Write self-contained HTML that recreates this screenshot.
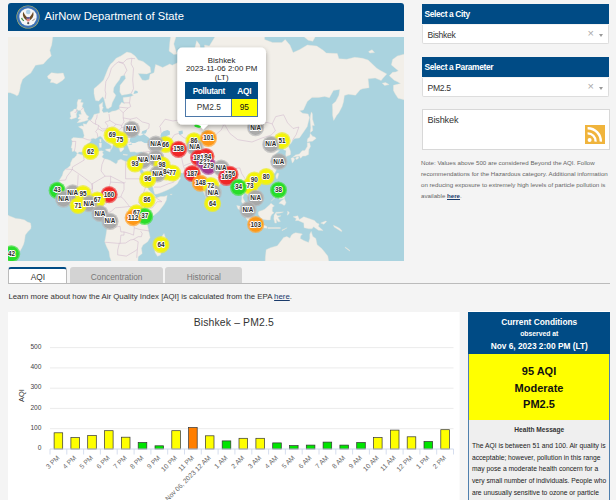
<!DOCTYPE html>
<html><head><meta charset="utf-8"><style>
*{margin:0;padding:0;box-sizing:border-box}
html,body{width:616px;height:500px;overflow:hidden;background:#f4f4f4;font-family:"Liberation Sans", sans-serif;position:relative}
.abs{position:absolute}
.hdr{left:8px;top:3px;width:396px;height:28px;background:#004b85;border-radius:3px 3px 0 0}
.hdr .t{position:absolute;left:36.6px;top:7.4px;font-size:11.2px;color:#fff;white-space:nowrap}
.sel-h{left:421.5px;width:187.7px;height:20px;background:#004b85;color:#fff;font-weight:bold;font-size:8.4px;letter-spacing:-0.35px;padding:5.6px 0 0 3px;white-space:nowrap}
.sel-i{left:421.5px;width:187.7px;height:19.4px;background:#fff;border:1px solid #ddd;border-top:none;border-radius:0 0 2px 2px;font-size:8.6px;color:#333;padding:5.8px 0 0 5px;letter-spacing:-0.3px}
.x{position:absolute;left:165px;top:2.7px;font-size:11px;color:#aaa}
.ar{position:absolute;left:176.6px;top:9.4px;width:0;height:0;border-left:2.5px solid transparent;border-right:2.5px solid transparent;border-top:3px solid #999}
.note{left:421px;top:156.5px;width:190px;font-size:6.17px;line-height:11px;color:#666}
.tab{top:267px;height:16.5px;font-size:8.3px;text-align:center;padding-top:5.3px;border-radius:3px 3px 0 0}
</style></head>
<body>
<div class="abs hdr"><svg class="abs" style="left:7.8px;top:2.0px" width="24" height="24" viewBox="0 0 24 24"><circle cx="12" cy="12" r="11.6" fill="#b8b866"/><circle cx="12" cy="12" r="11.0" fill="#3d73b6"/><circle cx="12" cy="12" r="8.7" fill="#f6f6f6"/><circle cx="12.2" cy="7.0" r="2.3" fill="#a9cde6"/><path d="M7.3,6.8 C6.3,9.8 7.0,13.2 10.8,15.4 L11,12.2 C9.6,11.2 8.4,9.4 7.3,6.8Z" fill="#6a4a25"/><path d="M17.1,6.8 C18.1,9.8 17.4,13.2 13.6,15.4 L13.4,12.2 C14.8,11.2 16.0,9.4 17.1,6.8Z" fill="#6a4a25"/><rect x="10.7" y="12.3" width="3" height="4.2" rx="1" fill="#e08080"/><rect x="10.7" y="12.3" width="3" height="1.3" fill="#2a4a9a"/><path d="M5.6,12.8 q0.6,2.4 2.4,3" stroke="#3a8a3a" stroke-width="1.2" fill="none"/><path d="M16.4,15.6 q1.6,-0.4 2.4,-2" stroke="#8a7a60" stroke-width="0.8" fill="none"/><circle cx="12.2" cy="18.2" r="1.1" fill="#555"/></svg><div class="t">AirNow Department of State</div></div><svg width="396" height="224" viewBox="0 0 396 224" style="position:absolute;left:8px;top:37px;display:block">
<rect width="396" height="224" fill="#aad3df"/>
<path d="M69.3,116.4 L68.1,114.8 L66.4,114.0 L64.0,114.4 L64.2,111.4 L63.1,110.8 L64.0,107.3 L64.2,104.2 L63.4,102.0 L65.5,100.5 L70.2,100.9 L75.3,101.2 L76.2,98.5 L74.6,92.6 L70.5,89.8 L73.4,88.8 L75.6,89.3 L75.1,86.7 L78.4,87.2 L80.6,83.7 L83.2,82.7 L85.2,79.6 L86.0,77.5 L89.2,76.7 L91.7,75.9 L91.7,71.6 L91.1,67.9 L94.7,65.2 L94.4,69.6 L95.3,70.2 L93.9,73.5 L95.5,75.7 L99.4,74.9 L100.7,75.9 L104.2,74.3 L107.5,73.8 L111.3,72.1 L111.4,68.7 L113.7,65.2 L116.5,66.7 L115.2,62.9 L115.2,60.4 L122.3,59.8 L125.5,58.2 L123.1,56.6 L117.6,57.6 L113.7,58.2 L111.8,55.0 L112.1,48.3 L117.6,41.4 L116.8,38.0 L112.9,39.2 L111.3,42.9 L108.1,46.9 L105.8,50.7 L105.3,55.0 L107.8,58.2 L106.9,60.4 L104.2,65.8 L103.4,69.6 L100.2,71.8 L98.5,71.3 L97.8,68.7 L96.7,64.4 L95.8,61.3 L94.7,59.8 L93.1,61.3 L90.7,64.1 L87.6,63.5 L86.8,60.4 L86.0,56.6 L86.0,51.7 L89.2,49.0 L92.3,46.2 L95.5,42.9 L97.8,37.3 L100.2,31.3 L102.6,27.0 L105.0,24.9 L108.1,21.3 L112.9,18.9 L118.9,15.1 L123.1,16.1 L127.1,18.9 L130.2,23.1 L135.0,24.4 L142.1,30.0 L142.9,35.3 L138.9,36.9 L130.2,36.5 L134.2,42.9 L137.3,43.6 L141.0,42.5 L142.1,37.3 L146.0,35.7 L147.6,27.5 L150.8,28.7 L154.7,30.4 L161.8,27.0 L164.2,28.3 L170.5,25.3 L173.7,21.3 L182.4,24.0 L184.8,27.0 L186.3,28.3 L183.8,22.6 L186.3,13.2 L188.7,3.7 L191.9,8.0 L192.7,15.6 L193.1,27.0 L194.2,34.9 L195.8,31.3 L196.6,24.9 L196.6,8.0 L201.3,9.1 L205.3,2.6 L214.0,-12.4 L256.6,-12.4 L256.6,2.6 L264.5,5.4 L274.0,5.4 L277.2,2.6 L281.9,8.0 L285.1,15.6 L291.4,12.7 L299.3,8.0 L308.8,9.1 L315.1,13.2 L318.3,16.1 L329.3,16.6 L330.9,21.7 L338.8,22.2 L346.7,20.3 L354.6,21.3 L360.1,23.1 L362.5,25.3 L368.8,31.3 L372.0,33.3 L378.8,36.9 L375.1,41.1 L373.2,43.6 L367.2,41.1 L360.1,41.8 L361.1,50.7 L354.6,51.7 L352.2,52.7 L347.5,58.2 L340.4,57.3 L336.4,58.5 L335.6,64.4 L334.1,69.6 L330.9,75.7 L328.8,78.3 L325.7,83.4 L324.6,78.3 L324.6,72.9 L324.4,67.3 L327.7,64.4 L330.9,58.2 L331.7,52.4 L325.4,53.4 L321.4,60.7 L316.7,59.5 L310.4,60.4 L304.0,60.4 L299.3,64.4 L295.4,72.9 L291.6,73.8 L294.6,76.2 L300.1,77.0 L301.5,80.4 L300.1,85.9 L299.3,89.6 L296.1,94.2 L291.4,100.9 L286.7,101.6 L284.6,103.5 L283.0,106.3 L280.3,109.0 L282.6,114.4 L282.6,117.4 L281.9,118.1 L278.0,119.5 L277.7,117.4 L278.1,113.6 L275.6,112.8 L275.9,109.4 L274.5,108.4 L271.2,107.3 L269.6,110.8 L270.7,106.7 L266.9,108.6 L264.2,110.4 L266.0,113.2 L271.6,113.6 L268.2,116.4 L266.4,118.7 L269.0,124.0 L270.7,126.0 L270.7,127.9 L268.6,132.2 L267.1,135.7 L264.5,137.6 L262.2,140.1 L257.4,141.4 L252.7,143.1 L251.6,142.6 L248.7,142.6 L246.7,144.0 L245.1,147.5 L247.2,150.5 L250.2,152.9 L250.8,157.8 L250.2,159.4 L246.4,162.3 L245.6,163.1 L243.7,163.8 L243.7,160.7 L240.8,159.9 L239.7,158.0 L237.5,156.0 L236.1,156.7 L234.8,160.7 L236.6,164.2 L238.5,166.6 L241.5,170.3 L242.7,175.2 L241.6,175.3 L238.2,173.0 L236.7,169.5 L233.4,164.7 L233.9,161.5 L233.7,156.7 L232.5,151.0 L231.4,151.0 L227.4,151.8 L226.9,147.7 L224.2,144.0 L223.5,141.8 L221.1,141.8 L218.7,142.1 L215.6,143.5 L214.8,145.1 L211.6,147.7 L208.1,150.8 L205.0,152.6 L204.8,156.7 L204.2,160.7 L201.8,163.3 L200.6,164.6 L198.5,161.7 L196.3,156.8 L194.2,151.8 L193.1,146.8 L192.8,142.6 L188.7,143.6 L187.1,141.1 L189.2,140.2 L186.3,139.2 L184.0,136.9 L183.2,135.9 L175.3,136.2 L171.0,135.5 L168.6,132.9 L167.1,132.7 L164.2,133.8 L159.5,131.5 L157.6,129.1 L154.7,127.7 L153.9,129.5 L156.5,133.1 L157.4,134.5 L159.5,136.6 L164.2,138.0 L166.6,136.6 L167.1,134.3 L167.2,136.8 L170.5,139.0 L172.6,140.9 L170.5,144.5 L169.3,146.8 L165.0,150.1 L160.6,152.4 L154.7,155.1 L149.2,157.0 L146.8,157.2 L145.6,153.4 L145.2,151.0 L142.9,146.8 L140.0,142.6 L138.1,138.3 L135.8,134.8 L133.4,131.1 L133.4,128.6 L132.6,131.3 L132.1,131.8 L129.6,127.9 L131.0,132.2 L131.8,134.8 L134.2,138.3 L136.9,143.5 L137.2,147.3 L139.1,149.3 L140.5,152.6 L143.7,155.9 L146.5,158.6 L148.4,160.9 L152.4,159.6 L156.3,159.4 L159.2,158.6 L158.7,160.9 L158.4,163.1 L156.3,167.1 L153.9,170.3 L150.8,174.2 L146.0,178.2 L142.9,181.0 L140.8,183.7 L139.4,187.7 L140.5,193.3 L142.1,200.6 L139.7,204.7 L135.0,208.0 L133.4,211.3 L134.2,216.5 L130.2,219.8 L129.9,224.4 L128.7,236.5 L103.4,236.5 L103.4,224.4 L101.8,220.0 L101.0,214.6 L98.6,209.7 L96.7,204.7 L97.8,198.9 L99.0,191.4 L97.4,186.9 L96.7,184.5 L92.8,179.0 L93.1,176.6 L93.6,173.4 L93.1,171.1 L91.5,170.1 L89.2,170.4 L87.6,170.6 L85.2,167.4 L83.5,167.3 L80.5,167.6 L74.9,169.8 L71.8,169.2 L66.2,170.4 L61.5,167.4 L59.9,166.3 L57.2,163.9 L56.5,162.3 L54.4,159.9 L51.7,157.8 L50.4,153.9 L52.0,151.8 L52.5,146.8 L51.2,143.5 L54.4,138.3 L55.3,134.8 L57.6,132.0 L59.9,130.8 L62.3,128.6 L62.6,125.9 L64.7,121.6 L66.1,121.0 L68.6,118.3 L68.8,116.8 L69.7,116.6 L74.1,118.1 L78.1,116.8 L82.8,114.8 L87.6,114.4 L93.6,113.8 L95.5,114.4 L94.4,115.4 L95.5,117.4 L93.9,119.9 L96.3,121.8 L99.0,122.3 L102.3,123.4 L108.1,127.1 L109.7,124.9 L109.7,123.6 L112.9,122.3 L117.6,124.6 L125.3,125.5 L129.1,125.3 L132.1,125.3 L133.4,122.5 L134.7,117.4 L134.8,116.6 L135.3,115.2 L133.4,114.8 L128.7,115.4 L126.4,114.8 L122.3,115.0 L121.2,112.8 L120.0,109.4 L119.5,108.4 L119.2,106.7 L116.0,106.9 L114.3,107.1 L115.2,109.4 L116.0,112.0 L113.7,114.4 L112.1,114.8 L111.4,111.8 L110.0,109.2 L108.8,106.3 L107.3,103.1 L104.2,100.9 L101.8,98.7 L99.9,97.4 L99.4,96.1 L97.5,97.0 L97.7,99.4 L99.6,100.7 L101.8,104.2 L103.4,105.2 L107.3,108.2 L105.0,107.5 L104.3,110.4 L102.9,112.6 L103.7,109.4 L103.1,108.4 L100.7,106.7 L97.8,104.8 L95.3,102.5 L94.4,100.7 L92.2,99.0 L89.9,100.3 L87.6,101.8 L85.2,101.2 L82.8,102.0 L83.2,103.5 L81.6,105.4 L79.4,106.9 L78.1,109.4 L78.4,111.0 L77.3,111.8 L75.6,113.8 L74.6,115.0 L71.1,115.0Z M-16.7,55.7 L2.3,55.7 L7.0,57.6 L8.7,58.8 L10.2,57.9 L11.7,53.4 L12.5,48.3 L14.6,42.2 L18.7,38.8 L22.8,36.1 L27.5,28.3 L35.4,27.0 L39.4,22.6 L43.3,18.9 L41.8,13.2 L43.7,8.0 L46.5,-12.4 L-16.7,-12.4Z M39.4,39.2 L43.3,35.7 L49.7,36.5 L55.2,36.1 L56.8,41.1 L54.4,43.6 L48.9,46.9 L44.9,45.5 L42.2,45.5 L43.3,42.5 L40.2,41.4Z M69.1,85.7 L72.6,85.2 L76.5,84.2 L80.3,82.9 L79.5,81.7 L80.8,79.4 L78.6,78.1 L77.9,76.7 L76.2,74.0 L75.6,71.3 L74.6,70.2 L74.0,69.3 L75.3,65.8 L72.6,65.2 L73.4,62.5 L70.2,62.5 L69.1,65.8 L69.3,68.7 L68.6,72.1 L70.5,73.5 L72.6,73.2 L73.0,75.7 L73.4,77.3 L70.8,77.5 L71.6,79.4 L69.9,81.2 L70.2,81.9 L73.0,82.4 L71.5,82.9Z M68.6,80.4 L68.3,77.3 L69.3,74.3 L68.3,72.1 L66.2,72.1 L64.7,74.0 L62.3,75.1 L62.5,77.8 L63.1,79.4 L61.7,81.2 L63.1,82.2 L65.5,81.4Z M97.7,112.2 L102.7,111.8 L102.0,115.0 L97.7,113.2Z M91.1,106.1 L93.6,106.1 L93.3,110.4 L91.4,110.6Z M91.7,102.2 L93.1,102.0 L93.1,104.6 L92.5,105.4 L91.7,104.2Z M115.2,117.2 L119.7,117.7 L119.2,118.3 L115.2,117.9Z M129.1,118.3 L132.8,117.0 L131.8,119.1 L129.4,118.9Z M204.3,161.8 L205.0,161.8 L207.5,165.5 L206.9,167.6 L205.3,168.1 L204.2,166.3Z M156.0,196.5 L157.9,202.2 L156.3,205.5 L153.9,213.0 L152.5,218.0 L149.5,219.3 L147.1,215.6 L146.5,211.3 L147.9,207.1 L147.6,204.7 L150.8,202.7 L153.1,200.6Z M283.0,121.2 L285.1,120.4 L286.7,122.1 L285.4,125.1 L284.3,125.9 L283.5,123.1Z M287.5,121.2 L289.0,119.7 L290.9,119.9 L290.1,121.8 L288.2,122.5Z M284.9,120.2 L287.5,117.9 L291.4,117.0 L294.1,113.8 L296.9,113.4 L299.3,109.4 L299.3,105.9 L301.7,105.7 L302.5,109.4 L300.9,112.4 L300.7,114.6 L300.6,117.4 L299.0,118.3 L297.4,119.1 L294.6,119.1 L294.2,119.7 L292.5,121.2 L291.4,119.1 L288.2,119.5Z M299.3,105.2 L301.2,104.6 L304.4,104.2 L308.1,101.4 L306.9,99.9 L304.8,99.4 L302.3,96.5 L301.7,99.9 L299.8,101.4 L299.3,103.1Z M302.5,95.4 L304.8,93.5 L304.2,88.4 L306.4,88.4 L304.5,82.2 L304.4,77.0 L303.4,74.9 L302.5,78.3 L302.1,82.2 L302.8,90.7 L302.3,94.2Z M269.3,136.1 L270.9,136.6 L269.3,141.8 L268.8,141.9 L267.9,140.1 L268.0,138.0Z M249.7,146.5 L252.2,145.0 L253.5,145.8 L251.9,148.0 L249.8,147.7Z M268.6,147.7 L271.2,147.7 L270.9,151.0 L270.2,152.1 L271.6,154.7 L274.2,156.7 L272.4,156.7 L269.3,155.4 L268.6,154.2 L267.7,151.8 L268.3,150.1Z M270.9,158.6 L274.0,157.5 L276.7,158.3 L276.4,161.5 L274.0,161.8 L271.6,162.3 L270.9,160.7Z M270.9,166.3 L273.2,163.9 L276.4,161.8 L278.0,165.5 L277.2,167.6 L276.1,168.5 L274.0,167.1Z M263.3,164.1 L266.9,160.7 L267.2,159.4 L265.6,161.8Z M250.3,175.0 L251.3,174.2 L254.0,173.4 L256.6,172.3 L259.8,169.5 L261.4,167.9 L263.0,166.3 L266.4,169.0 L264.5,170.3 L264.2,174.2 L266.0,175.8 L263.8,177.4 L262.6,179.8 L262.2,182.9 L259.0,182.9 L253.5,182.1 L251.9,179.8 L250.3,177.4Z M228.7,168.5 L232.2,169.2 L236.7,173.8 L240.1,176.6 L243.2,180.2 L245.6,182.3 L245.3,186.6 L243.2,186.7 L239.7,183.7 L236.6,179.0 L233.7,174.7 L229.8,171.6Z M244.3,188.2 L246.4,186.9 L249.2,187.4 L252.7,188.3 L256.2,188.3 L259.0,189.6 L258.9,191.2 L253.5,190.6 L248.7,189.8 L246.2,189.1Z M259.8,190.4 L266.1,190.4 L272.4,190.6 L272.4,191.4 L266.1,191.5 L259.8,191.4Z M274.0,193.0 L279.1,190.7 L278.0,191.5 L274.0,193.8Z M266.9,186.1 L268.5,186.1 L268.3,182.1 L270.1,184.8 L272.4,184.5 L269.9,180.4 L273.1,178.8 L269.3,178.8 L268.0,176.5 L272.4,176.0 L275.4,174.9 L268.0,175.3 L266.1,178.2 L265.8,181.8Z M279.6,173.9 L281.4,175.8 L280.3,177.4 L279.2,178.2 L279.7,175.8Z M285.1,179.8 L289.8,178.8 L291.4,182.6 L295.8,179.8 L300.9,181.5 L306.4,183.4 L308.8,186.1 L311.1,187.1 L310.4,189.3 L315.1,193.6 L310.4,193.3 L305.6,189.8 L304.0,191.8 L300.9,191.8 L296.1,190.7 L295.8,186.1 L290.1,183.4 L287.5,183.7 L288.2,181.4Z M312.7,186.1 L317.5,184.0 L318.7,184.5 L315.9,187.2Z M256.6,236.5 L257.4,220.0 L258.2,212.7 L262.5,210.7 L269.3,208.8 L271.2,206.3 L273.4,203.5 L275.6,200.6 L278.8,199.6 L281.9,201.2 L283.5,198.1 L285.1,196.8 L287.6,195.7 L292.2,196.5 L294.4,197.0 L292.7,198.9 L292.2,201.4 L295.8,203.5 L300.6,205.5 L301.8,201.4 L301.8,197.3 L303.2,194.4 L304.8,199.4 L307.8,201.4 L309.1,207.6 L310.0,208.5 L313.5,211.3 L316.4,214.7 L319.8,219.1 L320.8,224.4 L320.8,236.5Z M337.2,210.0 L342.0,213.5 L341.6,213.9 L337.2,210.7Z M325.4,188.2 L329.3,190.1 L332.2,191.7 L334.1,194.1 L333.3,194.6 L330.1,192.5 L326.2,190.1Z M-16.7,167.9 L-4.9,169.5 L-2.5,171.1 L-0.9,174.6 L-0.9,177.4 L1.5,179.0 L7.8,181.4 L12.5,182.0 L16.5,182.9 L19.6,185.1 L22.5,186.1 L23.1,189.3 L22.8,191.7 L19.6,194.9 L17.3,198.1 L16.5,203.8 L15.7,207.1 L14.1,210.5 L11.7,214.7 L7.8,215.3 L2.3,220.0 L1.3,224.4 L-16.7,236.5Z M161.1,14.1 L165.8,17.5 L168.9,17.1 L165.8,7.0 L169.7,-6.1 L163.4,-6.1 L161.8,5.4Z M360.6,14.6 L364.1,12.7 L366.5,15.6 L361.7,16.1Z M293.0,-12.4 L296.1,-0.2 L300.1,3.2 L304.8,4.3 L308.8,-3.1 L315.1,-6.1 L315.1,-12.4Z M374.2,46.2 L377.5,45.5 L381.1,47.6 L376.7,48.6Z M381.3,38.8 L384.6,35.3 L387.8,34.9 L390.3,33.7 L383.4,27.9 L384.6,22.6 L389.4,18.9 L402.0,15.6 L402.0,62.9 L396.5,62.9 L390.1,61.3 L387.0,56.6 L385.4,53.4 L385.4,48.3 L392.5,46.5 L389.4,44.7 L386.2,43.3Z M162.3,157.2 L164.2,157.3 L163.4,157.8 L162.5,157.7Z" fill="#f2efe9" stroke="#e6e2da" stroke-width="0.4"/>
<path d="M124.1,105.9 L122.3,105.0 L121.7,103.1 L122.2,101.6 L123.4,99.2 L125.0,97.2 L126.3,94.2 L127.9,94.0 L129.4,95.4 L131.0,95.6 L129.4,96.7 L131.0,98.7 L133.1,98.5 L135.8,97.0 L137.3,98.3 L140.8,100.7 L143.8,105.0 L141.3,106.3 L136.6,106.1 L133.4,104.2 L130.2,104.4 L127.1,106.1Z M133.4,96.7 L134.2,94.2 L138.9,92.6 L138.6,94.7 L137.5,96.5 L135.8,96.7Z M152.4,98.7 L153.1,96.5 L155.5,94.2 L159.5,93.1 L161.8,94.2 L162.0,97.6 L159.2,98.7 L157.9,99.2 L161.1,103.1 L161.5,106.3 L161.8,108.4 L163.3,112.4 L163.4,114.0 L158.7,114.8 L155.5,113.4 L155.4,111.6 L156.3,107.7 L154.9,104.6 L153.1,102.0Z M170.5,94.2 L174.5,93.5 L175.0,96.5 L172.1,98.1 L171.0,97.0Z M242.1,81.9 L244.8,81.7 L249.5,77.0 L251.1,72.9 L250.6,70.7 L248.4,75.7 L245.6,79.6Z M128.7,178.2 L131.8,177.9 L131.5,181.4 L128.7,181.5Z M194.2,94.9 L198.2,93.8 L202.9,94.2 L198.2,95.4 L195.0,96.5Z M120.4,107.5 L123.9,106.5 L124.2,107.5 L120.8,107.9Z M125.5,56.9 L129.9,56.0 L129.4,54.0 L126.8,53.4Z" fill="#aad3df"/>
<path d="M153.1,96.3 L152.4,90.7 L151.6,89.6 L157.1,82.2 L165.0,84.0 L174.5,82.2 L175.3,75.7 L187.1,71.8 L194.2,75.7 L199.0,75.7 L204.5,84.0 L210.0,83.4 L215.6,87.9 L223.5,84.4 L232.9,80.9 L239.3,83.4 L248.7,87.2 L259.0,85.4 L264.2,86.9 L267.7,79.6 L275.6,77.8 L279.6,85.9 L285.1,91.5 L290.9,90.0 L288.2,97.6 L285.1,102.2 L284.6,103.5 M216.8,87.9 L221.9,96.5 L229.8,102.7 L244.0,105.0 L254.3,100.9 L263.0,98.1 L267.4,93.8 L264.2,86.9 M215.6,87.9 L213.2,93.1 L208.4,97.0 L204.8,103.7 L195.8,107.9 L195.8,113.6 L197.9,114.8 L203.7,117.4 L202.1,123.1 L206.1,127.3 L204.7,129.9 L217.3,131.5 L223.5,131.7 L231.8,130.9 L233.7,136.6 L237.7,142.6 L239.3,141.1 L246.4,140.4 L248.7,142.6 M161.8,104.2 L166.6,97.6 L170.5,96.5 L176.1,100.9 L182.4,102.0 L187.1,105.2 L190.3,103.1 L195.8,101.6 L204.8,103.7 M163.4,113.8 L171.3,113.4 L174.5,115.2 L180.0,113.8 L184.8,114.0 L188.7,112.4 L195.8,113.6 M174.5,115.2 L173.7,121.2 L175.3,128.6 L176.8,132.7 L175.4,136.2 M195.8,114.4 L190.3,116.4 L187.1,122.1 L183.2,125.9 L176.1,128.6 M197.9,114.8 L195.0,122.1 L195.8,126.2 L190.3,131.7 L187.9,137.5 L185.9,138.8 M217.3,131.5 L217.9,134.3 L219.5,134.8 L223.5,136.6 L224.2,140.9 L223.5,143.5 M135.3,115.2 L144.5,114.2 L148.9,114.0 L147.6,109.4 L150.0,111.4 L153.9,111.4 M148.9,114.0 L150.0,118.3 L152.4,123.1 L154.7,127.7 M134.3,122.1 L135.8,124.9 L139.7,123.6 L144.5,125.9 L151.6,129.3 L153.9,130.4 M139.7,123.6 L142.9,119.3 L144.5,114.2 M146.0,150.1 L152.4,150.1 L160.3,146.8 L165.9,145.1 L167.2,136.8 M143.7,105.2 L146.8,106.3 L151.6,106.3 L154.9,104.6 M117.6,124.7 L117.6,141.8 L136.4,141.8 M117.6,145.1 L116.0,146.0 L102.6,139.2 L97.1,139.2 L93.1,134.0 L93.9,127.7 L96.3,121.8 M75.4,118.3 L76.2,123.1 L64.4,130.0 L64.4,132.5 L70.5,136.6 L80.0,143.5 L83.6,146.8 L84.7,146.5 L97.1,139.2 M64.4,132.5 L57.6,132.0 M51.2,143.5 L57.6,143.0 L59.1,139.2 L64.4,132.5 M59.1,153.8 L59.9,152.6 L69.4,152.6 L70.2,137.5 M83.6,146.8 L84.4,151.8 L78.1,153.4 L69.4,152.6 M84.7,146.5 L84.4,151.8 L83.6,158.6 L89.2,156.7 L95.5,156.0 L99.6,155.6 L102.6,145.1 L102.6,139.2 M99.6,155.6 L101.0,158.3 L101.8,161.5 L100.2,163.1 L98.6,166.3 L97.1,167.1 L92.0,170.0 M102.6,145.1 L116.0,146.0 L116.0,152.6 L113.7,157.5 L112.9,159.9 L115.2,161.5 L121.5,169.5 M101.8,161.5 L112.9,159.9 M136.4,141.8 L138.9,148.5 L137.3,151.0 L135.8,155.1 L134.2,157.5 L132.6,160.7 L131.8,163.9 L130.2,165.0 L134.2,169.5 L131.8,170.8 M121.5,169.5 L127.1,171.4 L131.8,170.8 L142.9,171.1 L144.5,170.6 L149.2,164.7 L153.9,164.7 L146.5,159.9 M131.8,170.8 L132.6,176.6 L131.8,179.0 L137.3,182.1 L140.2,184.8 M131.8,179.0 L126.3,179.0 L124.7,179.8 L125.5,184.5 L126.3,190.9 L131.8,192.5 L142.1,194.1 M92.0,170.0 L93.1,173.9 L96.0,173.9 L96.0,175.8 L100.2,175.8 L103.4,174.2 L107.3,170.8 L113.7,170.3 L121.5,169.5 M97.8,185.3 L104.2,186.9 L107.3,190.1 L112.1,189.3 L112.9,194.9 L116.0,194.9 L116.0,198.1 L112.9,198.1 L112.1,206.3 L109.7,206.3 L96.7,205.2 M116.0,194.9 L121.5,196.5 L125.5,198.1 L126.3,190.9 M112.1,206.3 L117.6,206.0 L122.3,203.0 L125.5,202.4 L130.2,204.7 L129.4,212.2 L127.9,213.5 L118.4,219.1 L109.7,217.9 L109.7,213.0 L111.3,206.3 M129.4,212.2 L128.7,220.8 M125.5,202.4 L130.2,199.7 L133.4,199.7 L134.2,196.5 L132.6,194.1 M59.9,166.3 L64.7,165.5 L66.2,163.9 L65.5,161.2 L60.7,157.7 L59.1,153.8 L51.7,155.9 M65.5,161.2 L69.4,161.5 L73.7,159.9 L78.9,159.9 L80.5,167.6 M73.7,159.9 L74.1,163.9 L73.4,169.2 M69.4,161.5 L64.7,165.5 M78.9,159.9 L78.1,153.4 M83.6,158.6 L82.4,167.3 M75.3,101.2 L79.7,102.7 L83.2,103.3 M64.0,104.4 L67.8,104.4 L67.2,110.4 L66.4,114.0 M82.0,83.2 L85.2,85.9 L87.6,87.2 L90.7,88.4 L89.9,91.7 L87.6,94.7 L89.2,96.5 L89.9,100.3 M87.6,87.2 L87.6,83.4 L88.8,80.9 L89.2,77.5 M90.7,88.4 L93.9,91.9 L98.6,91.9 L99.9,88.8 L97.1,85.2 L101.8,83.4 L101.0,77.0 M89.9,91.7 L94.7,94.2 L97.1,93.1 L99.7,94.2 L99.6,96.3 M101.8,83.4 L107.8,87.2 L113.7,88.4 L116.0,84.7 L115.2,80.9 L115.2,75.7 L111.3,72.1 M98.6,91.9 L105.0,90.7 L107.8,87.2 M105.0,90.7 L104.2,94.2 L108.1,95.8 L113.7,90.7 L113.7,88.4 M104.2,94.2 L101.8,96.5 L108.1,97.9 L108.9,102.0 L107.3,103.1 M108.1,95.8 L112.1,97.6 L113.7,99.9 L113.7,103.5 L110.5,104.2 L108.8,104.6 M113.7,99.9 L117.6,100.5 L123.3,100.3 M113.7,90.7 L120.0,90.3 L122.7,96.5 L125.0,97.2 M113.7,103.5 L114.4,105.7 L120.0,105.2 L122.3,105.0 M110.5,104.2 L111.3,106.7 L109.7,109.2 M120.0,90.3 L122.3,82.2 L128.7,80.7 L134.2,84.9 L138.1,85.9 L141.3,86.9 L140.8,91.2 L138.5,92.9 M115.2,80.9 L122.3,82.2 M115.2,75.7 L120.0,71.0 L122.7,69.6 L121.5,65.8 L122.3,59.8 M111.3,70.2 L120.0,71.0 M116.0,65.8 L121.5,65.8 M123.1,56.6 L125.5,51.7 L124.7,42.9 L125.5,31.3 L123.1,27.0 L123.9,21.3 M110.5,24.9 L116.0,27.0 L118.9,33.3 L116.0,38.0 M97.1,61.9 L97.8,56.6 L97.1,53.4 L97.8,44.7 L101.0,39.2 L103.4,31.3 L107.3,27.0 L110.5,24.9 L115.2,25.7 L118.9,22.2 L123.1,21.3 L127.1,21.7 M66.6,75.4 L68.3,75.1 L68.6,72.9 M74.9,70.7 L73.4,72.9" fill="none" stroke="#c9a9c6" stroke-width="0.55" stroke-opacity="0.8" stroke-linejoin="round"/>
<circle cx="247.6" cy="90.6" r="8.6" fill="#b8b8b8" fill-opacity="0.75"/><circle cx="247.6" cy="90.6" r="7.3" fill="#a6a6a6" fill-opacity="0.9"/>
<circle cx="123.5" cy="92.4" r="8.6" fill="#b8b8b8" fill-opacity="0.75"/><circle cx="123.5" cy="92.4" r="7.3" fill="#a6a6a6" fill-opacity="0.9"/>
<circle cx="111.8" cy="102.7" r="8.6" fill="#ecec2a" fill-opacity="0.75"/><circle cx="111.8" cy="102.7" r="7.3" fill="#f4f400" fill-opacity="0.9"/>
<circle cx="274.0" cy="103.7" r="8.6" fill="#ecec2a" fill-opacity="0.75"/><circle cx="274.0" cy="103.7" r="7.3" fill="#f4f400" fill-opacity="0.9"/>
<circle cx="186.0" cy="103.8" r="8.6" fill="#ecec2a" fill-opacity="0.75"/><circle cx="186.0" cy="103.8" r="7.3" fill="#f4f400" fill-opacity="0.9"/>
<circle cx="200.4" cy="101.4" r="8.6" fill="#ffa838" fill-opacity="0.75"/><circle cx="200.4" cy="101.4" r="7.3" fill="#ff9510" fill-opacity="0.9"/>
<circle cx="262.8" cy="107.4" r="8.6" fill="#b8b8b8" fill-opacity="0.75"/><circle cx="262.8" cy="107.4" r="7.3" fill="#a6a6a6" fill-opacity="0.9"/>
<circle cx="157.6" cy="107.5" r="8.6" fill="#ecec2a" fill-opacity="0.75"/><circle cx="157.6" cy="107.5" r="7.3" fill="#f4f400" fill-opacity="0.9"/>
<circle cx="104.2" cy="98.2" r="8.6" fill="#ecec2a" fill-opacity="0.75"/><circle cx="104.2" cy="98.2" r="7.3" fill="#f4f400" fill-opacity="0.9"/>
<circle cx="147.8" cy="107.2" r="8.6" fill="#b8b8b8" fill-opacity="0.75"/><circle cx="147.8" cy="107.2" r="7.3" fill="#a6a6a6" fill-opacity="0.9"/>
<circle cx="186.8" cy="110.2" r="8.6" fill="#b8b8b8" fill-opacity="0.75"/><circle cx="186.8" cy="110.2" r="7.3" fill="#a6a6a6" fill-opacity="0.9"/>
<circle cx="170.5" cy="112.4" r="8.6" fill="#f04848" fill-opacity="0.75"/><circle cx="170.5" cy="112.4" r="7.3" fill="#f02020" fill-opacity="0.9"/>
<circle cx="82.5" cy="114.5" r="8.6" fill="#ecec2a" fill-opacity="0.75"/><circle cx="82.5" cy="114.5" r="7.3" fill="#f4f400" fill-opacity="0.9"/>
<circle cx="198.0" cy="119.6" r="8.6" fill="#f04848" fill-opacity="0.75"/><circle cx="198.0" cy="119.6" r="7.3" fill="#f02020" fill-opacity="0.9"/>
<circle cx="190.6" cy="120.8" r="8.6" fill="#f04848" fill-opacity="0.75"/><circle cx="190.6" cy="120.8" r="7.3" fill="#f02020" fill-opacity="0.9"/>
<circle cx="147.8" cy="121.2" r="8.6" fill="#b8b8b8" fill-opacity="0.75"/><circle cx="147.8" cy="121.2" r="7.3" fill="#a6a6a6" fill-opacity="0.9"/>
<circle cx="135.2" cy="123.4" r="8.6" fill="#b8b8b8" fill-opacity="0.75"/><circle cx="135.2" cy="123.4" r="7.3" fill="#a6a6a6" fill-opacity="0.9"/>
<circle cx="270.8" cy="124.5" r="8.6" fill="#b8b8b8" fill-opacity="0.75"/><circle cx="270.8" cy="124.5" r="7.3" fill="#a6a6a6" fill-opacity="0.9"/>
<circle cx="196.4" cy="124.6" r="8.6" fill="#b05aa0" fill-opacity="0.75"/><circle cx="196.4" cy="124.6" r="7.3" fill="#a0308c" fill-opacity="0.9"/>
<circle cx="127.0" cy="127.0" r="8.6" fill="#ecec2a" fill-opacity="0.75"/><circle cx="127.0" cy="127.0" r="7.3" fill="#f4f400" fill-opacity="0.9"/>
<circle cx="154.0" cy="127.9" r="8.6" fill="#ecec2a" fill-opacity="0.75"/><circle cx="154.0" cy="127.9" r="7.3" fill="#f4f400" fill-opacity="0.9"/>
<circle cx="200.4" cy="129.4" r="8.6" fill="#b05aa0" fill-opacity="0.75"/><circle cx="200.4" cy="129.4" r="7.3" fill="#a0308c" fill-opacity="0.9"/>
<circle cx="213.2" cy="131.0" r="8.6" fill="#b8b8b8" fill-opacity="0.75"/><circle cx="213.2" cy="131.0" r="7.3" fill="#a6a6a6" fill-opacity="0.9"/>
<circle cx="158.5" cy="135.0" r="8.6" fill="#ecec2a" fill-opacity="0.75"/><circle cx="158.5" cy="135.0" r="7.3" fill="#f4f400" fill-opacity="0.9"/>
<circle cx="164.5" cy="136.0" r="8.6" fill="#ecec2a" fill-opacity="0.75"/><circle cx="164.5" cy="136.0" r="7.3" fill="#f4f400" fill-opacity="0.9"/>
<circle cx="184.2" cy="136.5" r="8.6" fill="#f04848" fill-opacity="0.75"/><circle cx="184.2" cy="136.5" r="7.3" fill="#f02020" fill-opacity="0.9"/>
<circle cx="149.6" cy="136.8" r="8.6" fill="#b8b8b8" fill-opacity="0.75"/><circle cx="149.6" cy="136.8" r="7.3" fill="#a6a6a6" fill-opacity="0.9"/>
<circle cx="222.0" cy="137.4" r="8.6" fill="#f04848" fill-opacity="0.75"/><circle cx="222.0" cy="137.4" r="7.3" fill="#f02020" fill-opacity="0.9"/>
<circle cx="258.2" cy="139.6" r="8.6" fill="#ecec2a" fill-opacity="0.75"/><circle cx="258.2" cy="139.6" r="7.3" fill="#f4f400" fill-opacity="0.9"/>
<circle cx="218.5" cy="140.3" r="8.6" fill="#f04848" fill-opacity="0.75"/><circle cx="218.5" cy="140.3" r="7.3" fill="#f02020" fill-opacity="0.9"/>
<circle cx="139.7" cy="142.3" r="8.6" fill="#ecec2a" fill-opacity="0.75"/><circle cx="139.7" cy="142.3" r="7.3" fill="#f4f400" fill-opacity="0.9"/>
<circle cx="246.3" cy="143.0" r="8.6" fill="#ecec2a" fill-opacity="0.75"/><circle cx="246.3" cy="143.0" r="7.3" fill="#f4f400" fill-opacity="0.9"/>
<circle cx="192.4" cy="146.2" r="8.6" fill="#ffa838" fill-opacity="0.75"/><circle cx="192.4" cy="146.2" r="7.3" fill="#ff9510" fill-opacity="0.9"/>
<circle cx="202.8" cy="148.6" r="8.6" fill="#ecec2a" fill-opacity="0.75"/><circle cx="202.8" cy="148.6" r="7.3" fill="#f4f400" fill-opacity="0.9"/>
<circle cx="242.0" cy="149.0" r="8.6" fill="#ecec2a" fill-opacity="0.75"/><circle cx="242.0" cy="149.0" r="7.3" fill="#f4f400" fill-opacity="0.9"/>
<circle cx="230.5" cy="150.3" r="8.6" fill="#44e044" fill-opacity="0.75"/><circle cx="230.5" cy="150.3" r="7.3" fill="#22dd22" fill-opacity="0.9"/>
<circle cx="270.5" cy="153.0" r="8.6" fill="#44e044" fill-opacity="0.75"/><circle cx="270.5" cy="153.0" r="7.3" fill="#22dd22" fill-opacity="0.9"/>
<circle cx="49.2" cy="153.4" r="8.6" fill="#44e044" fill-opacity="0.75"/><circle cx="49.2" cy="153.4" r="7.3" fill="#22dd22" fill-opacity="0.9"/>
<circle cx="64.7" cy="155.8" r="8.6" fill="#b8b8b8" fill-opacity="0.75"/><circle cx="64.7" cy="155.8" r="7.3" fill="#a6a6a6" fill-opacity="0.9"/>
<circle cx="205.2" cy="155.8" r="8.6" fill="#b8b8b8" fill-opacity="0.75"/><circle cx="205.2" cy="155.8" r="7.3" fill="#a6a6a6" fill-opacity="0.9"/>
<circle cx="75.0" cy="156.7" r="8.6" fill="#ecec2a" fill-opacity="0.75"/><circle cx="75.0" cy="156.7" r="7.3" fill="#f4f400" fill-opacity="0.9"/>
<circle cx="101.1" cy="157.6" r="8.6" fill="#f04848" fill-opacity="0.75"/><circle cx="101.1" cy="157.6" r="7.3" fill="#f02020" fill-opacity="0.9"/>
<circle cx="247.7" cy="161.0" r="8.6" fill="#b8b8b8" fill-opacity="0.75"/><circle cx="247.7" cy="161.0" r="7.3" fill="#a6a6a6" fill-opacity="0.9"/>
<circle cx="55.6" cy="162.1" r="8.6" fill="#b8b8b8" fill-opacity="0.75"/><circle cx="55.6" cy="162.1" r="7.3" fill="#a6a6a6" fill-opacity="0.9"/>
<circle cx="89.3" cy="163.0" r="8.6" fill="#ecec2a" fill-opacity="0.75"/><circle cx="89.3" cy="163.0" r="7.3" fill="#f4f400" fill-opacity="0.9"/>
<circle cx="139.0" cy="163.0" r="8.6" fill="#ecec2a" fill-opacity="0.75"/><circle cx="139.0" cy="163.0" r="7.3" fill="#f4f400" fill-opacity="0.9"/>
<circle cx="204.5" cy="166.5" r="8.6" fill="#ecec2a" fill-opacity="0.75"/><circle cx="204.5" cy="166.5" r="7.3" fill="#f4f400" fill-opacity="0.9"/>
<circle cx="81.0" cy="166.7" r="8.6" fill="#b8b8b8" fill-opacity="0.75"/><circle cx="81.0" cy="166.7" r="7.3" fill="#a6a6a6" fill-opacity="0.9"/>
<circle cx="70.1" cy="168.5" r="8.6" fill="#ecec2a" fill-opacity="0.75"/><circle cx="70.1" cy="168.5" r="7.3" fill="#f4f400" fill-opacity="0.9"/>
<circle cx="240.0" cy="172.9" r="8.6" fill="#b8b8b8" fill-opacity="0.75"/><circle cx="240.0" cy="172.9" r="7.3" fill="#a6a6a6" fill-opacity="0.9"/>
<circle cx="128.5" cy="175.8" r="8.6" fill="#ecec2a" fill-opacity="0.75"/><circle cx="128.5" cy="175.8" r="7.3" fill="#f4f400" fill-opacity="0.9"/>
<circle cx="92.0" cy="176.5" r="8.6" fill="#b8b8b8" fill-opacity="0.75"/><circle cx="92.0" cy="176.5" r="7.3" fill="#a6a6a6" fill-opacity="0.9"/>
<circle cx="136.7" cy="179.4" r="8.6" fill="#44e044" fill-opacity="0.75"/><circle cx="136.7" cy="179.4" r="7.3" fill="#22dd22" fill-opacity="0.9"/>
<circle cx="125.2" cy="180.7" r="8.6" fill="#ffa838" fill-opacity="0.75"/><circle cx="125.2" cy="180.7" r="7.3" fill="#ff9510" fill-opacity="0.9"/>
<circle cx="102.0" cy="184.4" r="8.6" fill="#b8b8b8" fill-opacity="0.75"/><circle cx="102.0" cy="184.4" r="7.3" fill="#a6a6a6" fill-opacity="0.9"/>
<circle cx="247.7" cy="187.5" r="8.6" fill="#ffa838" fill-opacity="0.75"/><circle cx="247.7" cy="187.5" r="7.3" fill="#ff9510" fill-opacity="0.9"/>
<circle cx="153.0" cy="207.7" r="8.6" fill="#ecec2a" fill-opacity="0.75"/><circle cx="153.0" cy="207.7" r="7.3" fill="#f4f400" fill-opacity="0.9"/>
<circle cx="3.6" cy="216.8" r="8.6" fill="#44e044" fill-opacity="0.75"/><circle cx="3.6" cy="216.8" r="7.3" fill="#22dd22" fill-opacity="0.9"/>
<g font-family="Liberation Sans" font-weight="bold" font-size="6.3" text-anchor="middle" fill="#2a2a2a" stroke="#fff" stroke-width="1.8" paint-order="stroke" stroke-linejoin="round">
<text x="247.6" y="92.6">N/A</text>
<text x="123.5" y="94.4">N/A</text>
<text x="104.2" y="100.2">69</text>
<text x="200.4" y="103.4">101</text>
<text x="111.8" y="104.7">75</text>
<text x="274.0" y="105.7">51</text>
<text x="186.0" y="105.8">86</text>
<text x="147.8" y="109.2">N/A</text>
<text x="262.8" y="109.4">N/A</text>
<text x="157.6" y="109.5">66</text>
<text x="186.8" y="112.2">N/A</text>
<text x="170.5" y="114.4">158</text>
<text x="82.5" y="116.5">62</text>
<text x="198.0" y="121.6">184</text>
<text x="190.6" y="122.8">181</text>
<text x="147.8" y="123.2">N/A</text>
<text x="135.2" y="125.4">N/A</text>
<text x="270.8" y="126.5">N/A</text>
<text x="196.4" y="126.6">222</text>
<text x="127.0" y="129.0">93</text>
<text x="154.0" y="129.9">98</text>
<text x="200.4" y="131.4">279</text>
<text x="213.2" y="133.0">N/A</text>
<text x="158.5" y="137.0">84</text>
<text x="164.5" y="138.0">77</text>
<text x="184.2" y="138.5">187</text>
<text x="149.6" y="138.8">N/A</text>
<text x="222.0" y="139.4">156</text>
<text x="258.2" y="141.6">80</text>
<text x="218.5" y="142.3">169</text>
<text x="139.7" y="144.3">96</text>
<text x="246.3" y="145.0">90</text>
<text x="192.4" y="148.2">148</text>
<text x="202.8" y="150.6">72</text>
<text x="242.0" y="151.0">73</text>
<text x="230.5" y="152.3">34</text>
<text x="270.5" y="155.0">38</text>
<text x="49.2" y="155.4">43</text>
<text x="64.7" y="157.8">N/A</text>
<text x="205.2" y="157.8">N/A</text>
<text x="75.0" y="158.7">95</text>
<text x="101.1" y="159.6">160</text>
<text x="247.7" y="163.0">N/A</text>
<text x="55.6" y="164.1">N/A</text>
<text x="89.3" y="165.0">67</text>
<text x="139.0" y="165.0">86</text>
<text x="204.5" y="168.5">64</text>
<text x="81.0" y="168.7">N/A</text>
<text x="70.1" y="170.5">71</text>
<text x="240.0" y="174.9">N/A</text>
<text x="128.5" y="177.8">67</text>
<text x="92.0" y="178.5">N/A</text>
<text x="136.7" y="181.4">37</text>
<text x="125.2" y="182.7">112</text>
<text x="102.0" y="186.4">N/A</text>
<text x="247.7" y="189.5">103</text>
<text x="153.0" y="209.7">64</text>
<text x="3.6" y="218.8">42</text>
</g>
<defs><filter id="sh" x="-20%" y="-20%" width="140%" height="150%"><feGaussianBlur in="SourceAlpha" stdDeviation="2.5"/><feOffset dy="1.5"/><feComponentTransfer><feFuncA type="linear" slope="0.35"/></feComponentTransfer><feMerge><feMergeNode/><feMergeNode in="SourceGraphic"/></feMerge></filter></defs>
<g filter="url(#sh)"><rect x="169.3" y="10.600000000000001" width="88.7" height="77" rx="5" fill="#fff"/><path d="M190.3,87.4 L195.3,92.5 L200.3,87.4Z" fill="#fff"/></g>
<ellipse cx="189.6" cy="89.3" rx="3.4" ry="1.3" transform="rotate(12 189.6 89.3)" fill="#22cc22"/>
</svg><div class="abs" style="left:177.3px;top:56.8px;width:88.7px;text-align:center;font-size:7.9px;line-height:8.4px;color:#222">Bishkek<br>2023-11-06 2:00 PM<br>(LT)</div><div class="abs" style="left:185.3px;top:82px;width:72.5px;height:34.5px;border:1px solid #4b77a8;background:#fff"><div class="abs" style="left:-1px;top:-1px;width:72.5px;height:16.5px;background:#004b85"></div><div class="abs" style="left:0;top:3.2px;width:45px;text-align:center;color:#fff;font-weight:bold;font-size:8.3px;letter-spacing:-0.35px">Pollutant</div><div class="abs" style="left:45px;top:3.2px;width:26px;text-align:center;color:#fff;font-weight:bold;font-size:8.3px;letter-spacing:-0.3px">AQI</div><div class="abs" style="left:45px;top:15.5px;width:25.5px;height:17px;background:#ff0;border-left:1px solid #4b77a8"></div><div class="abs" style="left:0;top:19.0px;width:45px;text-align:center;color:#333;font-size:8.4px">PM2.5</div><div class="abs" style="left:45px;top:19.0px;width:26px;text-align:center;color:#111;font-size:8.4px">95</div></div><div class="abs sel-h" style="top:3.6px">Select a City</div><div class="abs sel-i" style="top:24.5px">Bishkek<span class="x">×</span><span class="ar"></span></div><div class="abs sel-h" style="top:56.8px">Select a Parameter</div><div class="abs sel-i" style="top:77.5px">PM2.5<span class="x">×</span><span class="ar"></span></div><div class="abs" style="left:421.5px;top:109.3px;width:188.3px;height:40.5px;background:#fff;border:1px solid #d8d8d8"><div class="abs" style="left:5px;top:4.8px;font-size:9.1px;color:#333;letter-spacing:-0.15px">Bishkek</div><svg class="abs" style="left:162.5px;top:14.7px" width="20" height="19" viewBox="0 0 20 19"><rect width="20" height="19" fill="#f0b43c"/><circle cx="4.6" cy="15" r="2" fill="#fff"/><path d="M2.6,8.4 A7.8,7.8 0 0 1 10.6,16.6" fill="none" stroke="#fff" stroke-width="2.4"/><path d="M2.6,3.2 A13,13 0 0 1 15.8,16.6" fill="none" stroke="#fff" stroke-width="2.4"/></svg></div><div class="abs note">Note: Values above 500 are considered Beyond the AQI. Follow recommendations for the Hazardous category. Additional information on reducing exposure to extremely high levels of particle pollution is available <b style="color:#1a3a6a;text-decoration:underline">here</b>.</div><div class="abs tab" style="left:8.4px;width:59px;background:#fff;border:1px solid #bbb;border-top:2px solid #004b85;border-bottom:none;color:#333;height:17px;padding-top:2.9px">AQI</div><div class="abs tab" style="left:70px;width:93.3px;background:#d3d3d3;color:#777">Concentration</div><div class="abs tab" style="left:165.4px;width:76.8px;background:#d3d3d3;color:#777">Historical</div><div class="abs" style="left:8px;top:283px;width:602px;height:1px;background:#bbb"></div><div class="abs" style="left:8.4px;top:292px;font-size:7.84px;color:#333;white-space:nowrap">Learn more about how the Air Quality Index [AQI] is calculated from the EPA <b style="font-weight:normal;color:#1a3a6a;text-decoration:underline">here</b>.</div><svg width="451.6" height="188" style="position:absolute;left:8.4px;top:312px;display:block">
<rect width="451.6" height="188" fill="#fff"/>
<text x="225.79999999999998" y="13.699999999999989" text-anchor="middle" font-family="Liberation Sans" font-size="10.4" fill="#333" letter-spacing="0.15">Bishkek – PM2.5</text>
<line x1="42.0" x2="445.5" y1="116.7" y2="116.7" stroke="#e6e6e6" stroke-width="0.8"/>
<line x1="42.0" x2="445.5" y1="96.4" y2="96.4" stroke="#e6e6e6" stroke-width="0.8"/>
<line x1="42.0" x2="445.5" y1="76.2" y2="76.2" stroke="#e6e6e6" stroke-width="0.8"/>
<line x1="42.0" x2="445.5" y1="55.9" y2="55.9" stroke="#e6e6e6" stroke-width="0.8"/>
<line x1="42.0" x2="445.5" y1="35.6" y2="35.6" stroke="#e6e6e6" stroke-width="0.8"/>
<text x="33.4" y="138.1" text-anchor="end" font-family="Liberation Sans" font-size="6.6" fill="#444">0</text>
<text x="33.4" y="117.8" text-anchor="end" font-family="Liberation Sans" font-size="6.6" fill="#444">100</text>
<text x="33.4" y="97.5" text-anchor="end" font-family="Liberation Sans" font-size="6.6" fill="#444">200</text>
<text x="33.4" y="77.3" text-anchor="end" font-family="Liberation Sans" font-size="6.6" fill="#444">300</text>
<text x="33.4" y="57.0" text-anchor="end" font-family="Liberation Sans" font-size="6.6" fill="#444">400</text>
<text x="33.4" y="36.7" text-anchor="end" font-family="Liberation Sans" font-size="6.6" fill="#444">500</text>
<text transform="translate(15.6,83.60000000000002) rotate(-90)" text-anchor="middle" font-family="Liberation Sans" font-size="7.4" fill="#333">AQI</text>
<rect x="46.1" y="120.8" width="8.6" height="16.2" fill="#ffff00" stroke="#333" stroke-width="0.7"/>
<rect x="62.9" y="125.6" width="8.6" height="11.4" fill="#ffff00" stroke="#333" stroke-width="0.7"/>
<rect x="79.7" y="123.6" width="8.6" height="13.4" fill="#ffff00" stroke="#333" stroke-width="0.7"/>
<rect x="96.5" y="118.7" width="8.6" height="18.3" fill="#ffff00" stroke="#333" stroke-width="0.7"/>
<rect x="113.4" y="125.2" width="8.6" height="11.8" fill="#ffff00" stroke="#333" stroke-width="0.7"/>
<rect x="130.2" y="130.5" width="8.6" height="6.5" fill="#00e400" stroke="#333" stroke-width="0.7"/>
<rect x="147.0" y="133.8" width="8.6" height="3.2" fill="#00e400" stroke="#333" stroke-width="0.7"/>
<rect x="163.8" y="118.7" width="8.6" height="18.3" fill="#ffff00" stroke="#333" stroke-width="0.7"/>
<rect x="180.6" y="115.5" width="8.6" height="21.5" fill="#ff7e00" stroke="#333" stroke-width="0.7"/>
<rect x="197.4" y="123.8" width="8.6" height="13.2" fill="#ffff00" stroke="#333" stroke-width="0.7"/>
<rect x="214.2" y="128.9" width="8.6" height="8.1" fill="#00e400" stroke="#333" stroke-width="0.7"/>
<rect x="231.0" y="126.3" width="8.6" height="10.7" fill="#ffff00" stroke="#333" stroke-width="0.7"/>
<rect x="247.9" y="126.3" width="8.6" height="10.7" fill="#ffff00" stroke="#333" stroke-width="0.7"/>
<rect x="264.7" y="130.9" width="8.6" height="6.1" fill="#00e400" stroke="#333" stroke-width="0.7"/>
<rect x="281.5" y="133.6" width="8.6" height="3.4" fill="#00e400" stroke="#333" stroke-width="0.7"/>
<rect x="298.3" y="133.1" width="8.6" height="3.9" fill="#00e400" stroke="#333" stroke-width="0.7"/>
<rect x="315.1" y="130.1" width="8.6" height="6.9" fill="#00e400" stroke="#333" stroke-width="0.7"/>
<rect x="331.9" y="133.1" width="8.6" height="3.9" fill="#00e400" stroke="#333" stroke-width="0.7"/>
<rect x="348.7" y="130.5" width="8.6" height="6.5" fill="#00e400" stroke="#333" stroke-width="0.7"/>
<rect x="365.5" y="125.6" width="8.6" height="11.4" fill="#ffff00" stroke="#333" stroke-width="0.7"/>
<rect x="382.4" y="118.1" width="8.6" height="18.9" fill="#ffff00" stroke="#333" stroke-width="0.7"/>
<rect x="399.2" y="124.8" width="8.6" height="12.2" fill="#ffff00" stroke="#333" stroke-width="0.7"/>
<rect x="416.0" y="129.5" width="8.6" height="7.5" fill="#00e400" stroke="#333" stroke-width="0.7"/>
<rect x="432.8" y="117.7" width="8.6" height="19.3" fill="#ffff00" stroke="#333" stroke-width="0.7"/>
<line x1="42.0" x2="445.5" y1="137" y2="137" stroke="#ccd6eb" stroke-width="0.9"/>
<line x1="42.0" x2="42.0" y1="137" y2="142.5" stroke="#ccd6eb" stroke-width="0.8"/>
<line x1="58.8" x2="58.8" y1="137" y2="142.5" stroke="#ccd6eb" stroke-width="0.8"/>
<line x1="75.6" x2="75.6" y1="137" y2="142.5" stroke="#ccd6eb" stroke-width="0.8"/>
<line x1="92.4" x2="92.4" y1="137" y2="142.5" stroke="#ccd6eb" stroke-width="0.8"/>
<line x1="109.2" x2="109.2" y1="137" y2="142.5" stroke="#ccd6eb" stroke-width="0.8"/>
<line x1="126.1" x2="126.1" y1="137" y2="142.5" stroke="#ccd6eb" stroke-width="0.8"/>
<line x1="142.9" x2="142.9" y1="137" y2="142.5" stroke="#ccd6eb" stroke-width="0.8"/>
<line x1="159.7" x2="159.7" y1="137" y2="142.5" stroke="#ccd6eb" stroke-width="0.8"/>
<line x1="176.5" x2="176.5" y1="137" y2="142.5" stroke="#ccd6eb" stroke-width="0.8"/>
<line x1="193.3" x2="193.3" y1="137" y2="142.5" stroke="#ccd6eb" stroke-width="0.8"/>
<line x1="210.1" x2="210.1" y1="137" y2="142.5" stroke="#ccd6eb" stroke-width="0.8"/>
<line x1="226.9" x2="226.9" y1="137" y2="142.5" stroke="#ccd6eb" stroke-width="0.8"/>
<line x1="243.8" x2="243.8" y1="137" y2="142.5" stroke="#ccd6eb" stroke-width="0.8"/>
<line x1="260.6" x2="260.6" y1="137" y2="142.5" stroke="#ccd6eb" stroke-width="0.8"/>
<line x1="277.4" x2="277.4" y1="137" y2="142.5" stroke="#ccd6eb" stroke-width="0.8"/>
<line x1="294.2" x2="294.2" y1="137" y2="142.5" stroke="#ccd6eb" stroke-width="0.8"/>
<line x1="311.0" x2="311.0" y1="137" y2="142.5" stroke="#ccd6eb" stroke-width="0.8"/>
<line x1="327.8" x2="327.8" y1="137" y2="142.5" stroke="#ccd6eb" stroke-width="0.8"/>
<line x1="344.6" x2="344.6" y1="137" y2="142.5" stroke="#ccd6eb" stroke-width="0.8"/>
<line x1="361.4" x2="361.4" y1="137" y2="142.5" stroke="#ccd6eb" stroke-width="0.8"/>
<line x1="378.2" x2="378.2" y1="137" y2="142.5" stroke="#ccd6eb" stroke-width="0.8"/>
<line x1="395.1" x2="395.1" y1="137" y2="142.5" stroke="#ccd6eb" stroke-width="0.8"/>
<line x1="411.9" x2="411.9" y1="137" y2="142.5" stroke="#ccd6eb" stroke-width="0.8"/>
<line x1="428.7" x2="428.7" y1="137" y2="142.5" stroke="#ccd6eb" stroke-width="0.8"/>
<line x1="445.5" x2="445.5" y1="137" y2="142.5" stroke="#ccd6eb" stroke-width="0.8"/>
<text transform="translate(51.9,146.2) rotate(-45)" text-anchor="end" font-family="Liberation Sans" font-size="6.75" fill="#666">3 PM</text>
<text transform="translate(68.7,146.2) rotate(-45)" text-anchor="end" font-family="Liberation Sans" font-size="6.75" fill="#666">4 PM</text>
<text transform="translate(85.5,146.2) rotate(-45)" text-anchor="end" font-family="Liberation Sans" font-size="6.75" fill="#666">5 PM</text>
<text transform="translate(102.3,146.2) rotate(-45)" text-anchor="end" font-family="Liberation Sans" font-size="6.75" fill="#666">6 PM</text>
<text transform="translate(119.2,146.2) rotate(-45)" text-anchor="end" font-family="Liberation Sans" font-size="6.75" fill="#666">7 PM</text>
<text transform="translate(136.0,146.2) rotate(-45)" text-anchor="end" font-family="Liberation Sans" font-size="6.75" fill="#666">8 PM</text>
<text transform="translate(152.8,146.2) rotate(-45)" text-anchor="end" font-family="Liberation Sans" font-size="6.75" fill="#666">9 PM</text>
<text transform="translate(169.6,146.2) rotate(-45)" text-anchor="end" font-family="Liberation Sans" font-size="6.75" fill="#666">10 PM</text>
<text transform="translate(186.4,146.2) rotate(-45)" text-anchor="end" font-family="Liberation Sans" font-size="6.75" fill="#666">11 PM</text>
<text transform="translate(203.2,146.2) rotate(-45)" text-anchor="end" font-family="Liberation Sans" font-size="6.75" fill="#666">Nov 06, 2023 12 AM</text>
<text transform="translate(220.0,146.2) rotate(-45)" text-anchor="end" font-family="Liberation Sans" font-size="6.75" fill="#666">1 AM</text>
<text transform="translate(236.8,146.2) rotate(-45)" text-anchor="end" font-family="Liberation Sans" font-size="6.75" fill="#666">2 AM</text>
<text transform="translate(253.7,146.2) rotate(-45)" text-anchor="end" font-family="Liberation Sans" font-size="6.75" fill="#666">3 AM</text>
<text transform="translate(270.5,146.2) rotate(-45)" text-anchor="end" font-family="Liberation Sans" font-size="6.75" fill="#666">4 AM</text>
<text transform="translate(287.3,146.2) rotate(-45)" text-anchor="end" font-family="Liberation Sans" font-size="6.75" fill="#666">5 AM</text>
<text transform="translate(304.1,146.2) rotate(-45)" text-anchor="end" font-family="Liberation Sans" font-size="6.75" fill="#666">6 AM</text>
<text transform="translate(320.9,146.2) rotate(-45)" text-anchor="end" font-family="Liberation Sans" font-size="6.75" fill="#666">7 AM</text>
<text transform="translate(337.7,146.2) rotate(-45)" text-anchor="end" font-family="Liberation Sans" font-size="6.75" fill="#666">8 AM</text>
<text transform="translate(354.5,146.2) rotate(-45)" text-anchor="end" font-family="Liberation Sans" font-size="6.75" fill="#666">9 AM</text>
<text transform="translate(371.3,146.2) rotate(-45)" text-anchor="end" font-family="Liberation Sans" font-size="6.75" fill="#666">10 AM</text>
<text transform="translate(388.2,146.2) rotate(-45)" text-anchor="end" font-family="Liberation Sans" font-size="6.75" fill="#666">11 AM</text>
<text transform="translate(405.0,146.2) rotate(-45)" text-anchor="end" font-family="Liberation Sans" font-size="6.75" fill="#666">12 PM</text>
<text transform="translate(421.8,146.2) rotate(-45)" text-anchor="end" font-family="Liberation Sans" font-size="6.75" fill="#666">1 PM</text>
<text transform="translate(438.6,146.2) rotate(-45)" text-anchor="end" font-family="Liberation Sans" font-size="6.75" fill="#666">2 PM</text>
</svg><div class="abs" style="left:468px;top:311px;width:142px;height:1px;background:#fff"></div><div class="abs" style="left:468px;top:312px;width:142px;height:200px;background:#efefef;border:1px solid #4f7fae"></div><div class="abs" style="left:468px;top:312px;width:142px;height:42.3px;background:#004b85;color:#fff;text-align:center;font-weight:bold"><div class="abs" style="left:0;width:142.5px;top:5.2px;font-size:8.35px">Current Conditions</div><div class="abs" style="left:0;width:142.5px;top:18.3px;font-size:6.8px">observed at</div><div class="abs" style="left:0;width:142.5px;top:29.3px;font-size:8.36px">Nov 6, 2023 2:00 PM (LT)</div></div><div class="abs" style="left:469px;top:354.3px;width:140px;height:65.6px;background:#ff0;color:#111;text-align:center;font-weight:bold;font-size:11px;line-height:16.2px;padding-top:9px">95 AQI<br>Moderate<br>PM2.5</div><div class="abs" style="left:468px;top:426px;width:142.5px;text-align:center;font-weight:bold;font-size:6.62px;color:#333">Health Message</div><div class="abs" style="left:471.9px;top:439.8px;width:136px;font-size:6.72px;line-height:11.85px;color:#222">The AQI is between 51 and 100. Air quality is acceptable; however, pollution in this range may pose a moderate health concern for a very small number of individuals. People who are unusually sensitive to ozone or particle pollution should consider reducing prolonged or heavy exertion.</div>
</body></html>
